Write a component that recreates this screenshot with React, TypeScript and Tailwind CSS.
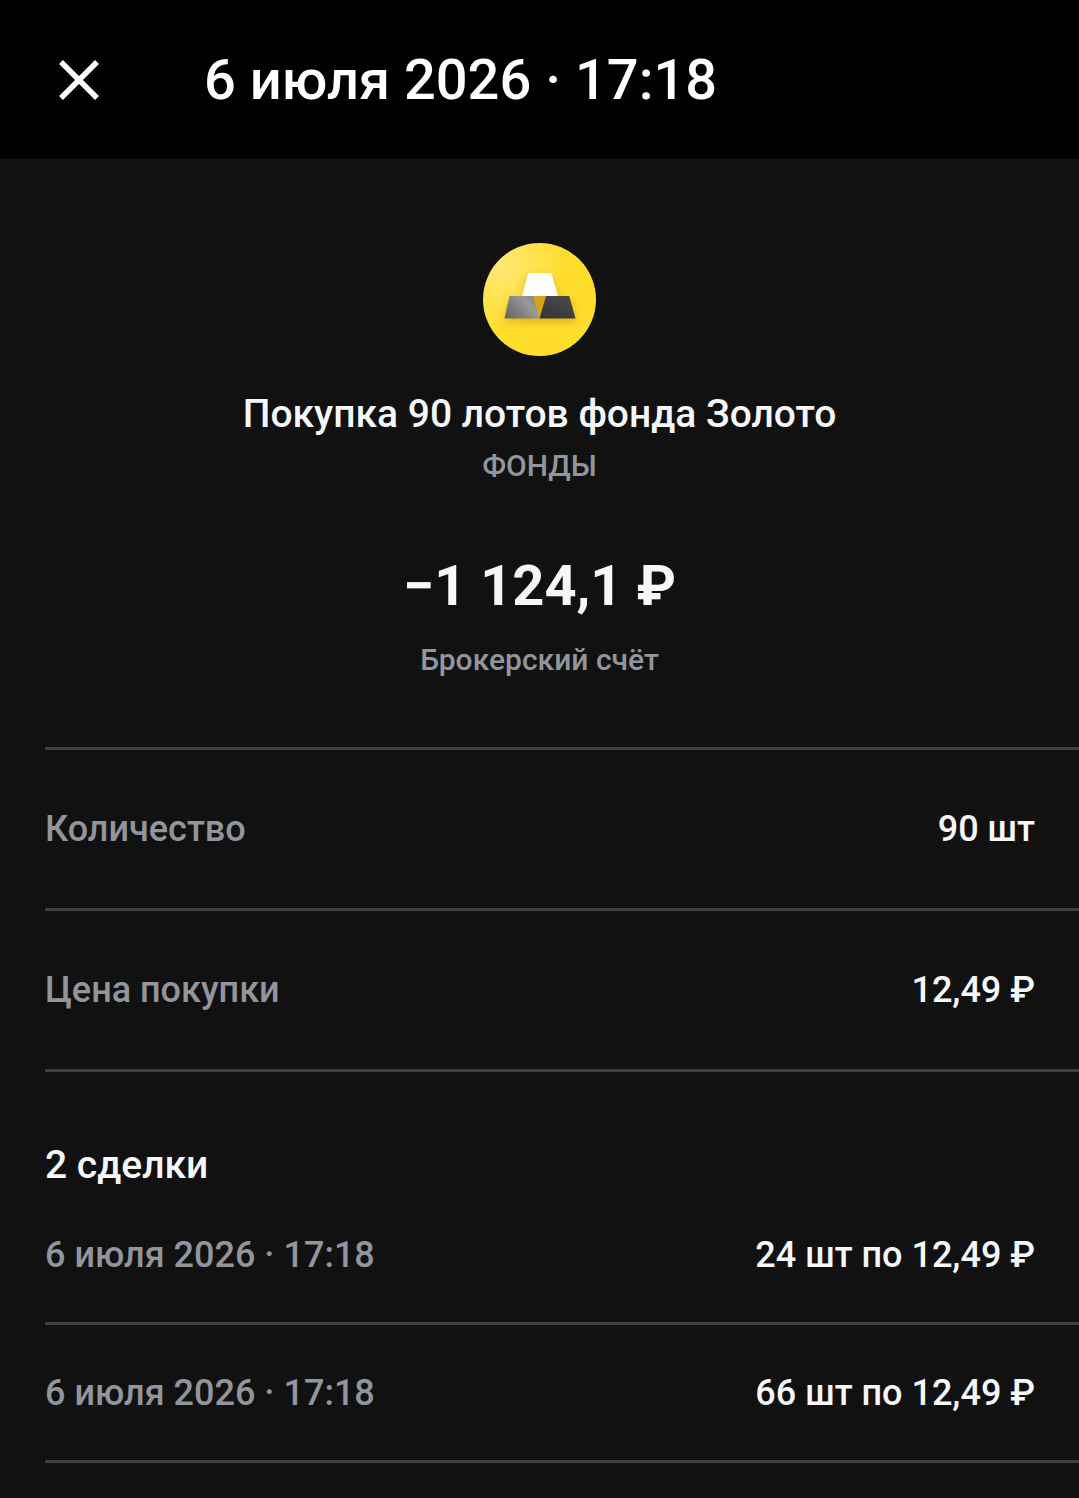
interface Detail {
  label: string;
  value: string;
}

const details: Detail[] = [
  { label: "Количество", value: "90 шт" },
  { label: "Цена покупки", value: "12,49 ₽" },
];

const deals: Detail[] = [
  { label: "6 июля 2026 · 17:18", value: "24 шт по 12,49 ₽" },
  { label: "6 июля 2026 · 17:18", value: "66 шт по 12,49 ₽" },
];

function GoldIcon() {
  return (
    <svg className="size-[113px]" viewBox="0 0 113 113" aria-hidden="true">
      <defs>
        <radialGradient id="coin" cx="0.15" cy="0.2" r="0.6">
          <stop offset="0" stopColor="#ffe873" />
          <stop offset="1" stopColor="#ffdd2d" />
        </radialGradient>
        <linearGradient id="barLeft" x1="0" y1="0.8" x2="1" y2="0.2">
          <stop offset="0" stopColor="#666666" />
          <stop offset="0.7" stopColor="#999999" />
          <stop offset="1" stopColor="#858585" />
        </linearGradient>
        <linearGradient id="barRight" x1="0" y1="1" x2="0.6" y2="0">
          <stop offset="0" stopColor="#333333" />
          <stop offset="1" stopColor="#4a4a4a" />
        </linearGradient>
        <filter id="shade" x="-30%" y="-30%" width="160%" height="180%">
          <feGaussianBlur stdDeviation="4" />
        </filter>
      </defs>
      <circle cx="56.5" cy="56.5" r="56.5" fill="url(#coin)" />
      <path
        d="M45 34h23l7 23h12l6 22H21l6-22h12z"
        fill="#b88a00"
        opacity="0.5"
        filter="url(#shade)"
      />
      <path d="M48 53h17l-9 22z" fill="#d6a51a" />
      <path d="M45.3 30h23l6.7 23H39z" fill="#ffffff" />
      <path d="M26.5 53H50l6.5 22.5h-35z" fill="url(#barLeft)" />
      <path d="M63 53h23.3l6.2 22.5h-36z" fill="url(#barRight)" />
    </svg>
  );
}

export default function App() {
  return (
    <div className="min-h-screen bg-[#111111] font-[Roboto,sans-serif] font-medium text-[#f6f7f8]">
      {/* Header */}
      <header className="flex h-[159px] items-center bg-black px-14 text-white">
        <button type="button" aria-label="Закрыть" className="size-12 shrink-0">
          <svg
            className="size-full"
            viewBox="0 0 48 48"
            fill="none"
            stroke="currentColor"
            strokeWidth={5.5}
          >
            <path d="M5 6l36 36M41 6L5 42" />
          </svg>
        </button>
        <h1 className="ml-25 text-[56px] leading-16">6 июля 2026 · 17:18</h1>
      </header>

      {/* Operation summary */}
      <section className="flex flex-col items-center pt-21 pb-[63px] text-center">
        <GoldIcon />
        <h2 className="mt-9 text-[39px] leading-11">
          Покупка 90 лотов фонда Золото
        </h2>
        <p className="mt-2 text-[30px] leading-11 text-[#93959d]">ФОНДЫ</p>
        <p className="mt-15 text-[56px] leading-19 font-bold">−1 124,1 ₽</p>
        <p className="mt-3 text-[30px] leading-12 text-[#93959d]">
          Брокерский счёт
        </p>
      </section>

      {/* Details */}
      <dl className="ml-[45px] border-t-3 border-[#404040] text-[36px] leading-12">
        {details.map((detail) => (
          <div
            key={detail.label}
            className="flex h-[161px] items-center justify-between border-b-3 border-[#404040] pr-11"
          >
            <dt className="text-[#93959d]">{detail.label}</dt>
            <dd>{detail.value}</dd>
          </div>
        ))}
      </dl>

      {/* Deals */}
      <section className="ml-[45px]">
        <h2 className="pt-[71px] text-[39px] leading-11">2 сделки</h2>
        <ul className="text-[36px] leading-12">
          {deals.map((deal) => (
            <li
              key={deal.value}
              className="flex h-[138px] items-center justify-between border-b-3 border-[#404040] pr-11"
            >
              <span className="text-[#93959d]">{deal.label}</span>
              <span>{deal.value}</span>
            </li>
          ))}
        </ul>
      </section>
    </div>
  );
}
